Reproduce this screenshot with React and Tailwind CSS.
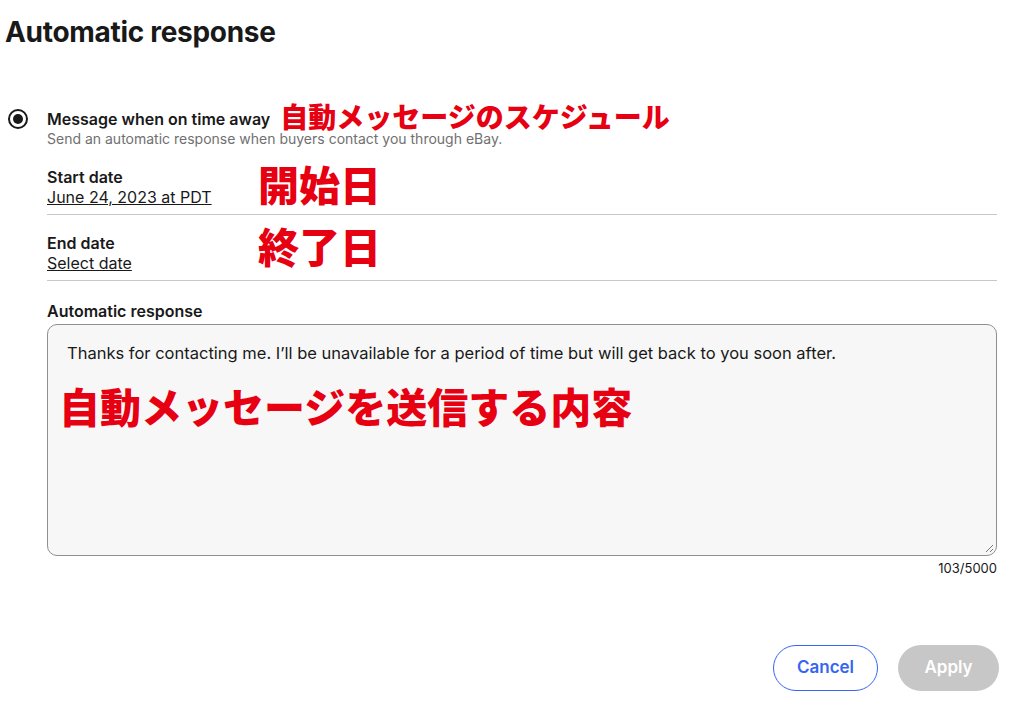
const jp = { fontFamily: '"Noto Sans CJK JP", "Noto Sans", sans-serif' };

export default function App() {
  return (
    <div className="w-[1024px] h-[713px] bg-white text-[#191919] relative" style={{ fontFamily: 'Inter, "Liberation Sans", sans-serif' }}>
      <h1 className="absolute left-[5px] top-[11px] text-[28px] font-bold tracking-[-0.3px]">Automatic response</h1>

      <div className="absolute left-[7px] top-[104px] w-[990px] flex">
        <div className="w-[40px] pt-[5px] pl-[1px]">
          <div className="w-[20px] h-[20px] rounded-full border-2 border-[#191919] flex items-center justify-center">
            <div className="w-[10px] h-[10px] rounded-full bg-[#191919]" />
          </div>
        </div>
        <div className="flex-1">
          <div className="flex items-end h-[26px]">
            <span className="text-[16px] font-semibold leading-[20px] mb-[1px]">Message when on time away</span>
            <span className="ml-[10px] text-[28px] font-black text-[#e60012] leading-[28px]" style={jp}>自動メッセージのスケジュール</span>
          </div>
          <div className="text-[14px] text-[#707070] leading-[17px]">Send an automatic response when buyers contact you through eBay.</div>

          <div className="mt-[8px] h-[60px] border-b border-[#c7c7c7] flex">
            <div className="w-[211px] pt-[12px]">
              <div className="text-[16px] font-semibold leading-[20px]">Start date</div>
              <div className="text-[16px] underline leading-[20px]">June 24, 2023 at PDT</div>
            </div>
            <div className="text-[41px] font-black text-[#e60012] leading-[44px] mt-[6px]" style={jp}>開始日</div>
          </div>
          <div className="h-[66px] border-b border-[#c7c7c7] flex">
            <div className="w-[211px] pt-[18px]">
              <div className="text-[16px] font-semibold leading-[20px]">End date</div>
              <div className="text-[16px] underline leading-[20px]">Select date</div>
            </div>
            <div className="text-[41px] font-black text-[#e60012] leading-[44px] mt-[8px]" style={jp}>終了日</div>
          </div>

          <div className="mt-[20px] text-[16px] font-semibold leading-[20px]">Automatic response</div>
          <div className="mt-[3px] h-[232px] rounded-[10px] border border-[#8f8f8f] bg-[#f7f7f7] relative px-[19px] pt-[17px]">
            <div className="text-[16.5px] leading-[22px]">Thanks for contacting me. I’ll be unavailable for a period of time but will get back to you soon after.</div>
            <div className="mt-[16px] -ml-[8px] text-[41px] font-black text-[#e60012] leading-[50px]" style={jp}>自動メッセージを送信する内容</div>
            <svg className="absolute right-[2px] bottom-[2px]" width="9" height="9" viewBox="0 0 9 9"><path d="M8 1 1 8M8 5 5 8" stroke="#777" strokeWidth="1" /></svg>
          </div>
          <div className="text-right text-[13px] leading-[16px] mt-[4px]">103/5000</div>
        </div>
      </div>

      <div className="absolute left-[773px] top-[645px] flex gap-[20px]">
        <button className="w-[105px] h-[46px] rounded-full border border-[#3665f3] text-[#3665f3] text-[17px] font-semibold bg-white">Cancel</button>
        <button className="w-[101px] h-[46px] rounded-full bg-[#c7c7c7] text-white text-[17px] font-semibold">Apply</button>
      </div>
    </div>
  );
}
